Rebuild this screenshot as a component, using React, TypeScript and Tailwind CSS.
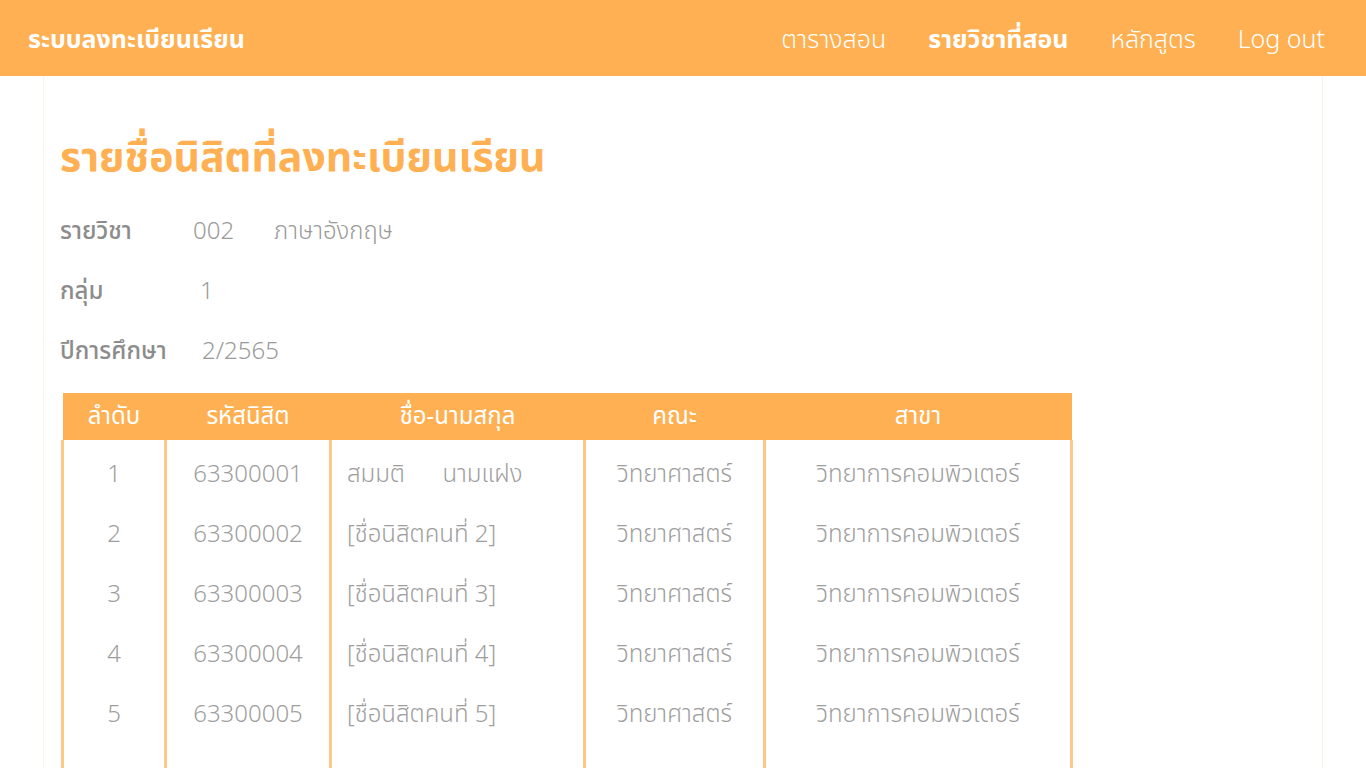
import React from "react";

const students = [
  { no: 1, id: "63300001", name: "สมมติ\u00a0\u00a0\u00a0\u00a0\u00a0\u00a0นามแฝง" },
  { no: 2, id: "63300002", name: "[ชื่อนิสิตคนที่ 2]" },
  { no: 3, id: "63300003", name: "[ชื่อนิสิตคนที่ 3]" },
  { no: 4, id: "63300004", name: "[ชื่อนิสิตคนที่ 4]" },
  { no: 5, id: "63300005", name: "[ชื่อนิสิตคนที่ 5]" },
];

const cell = "border-x-[3px] border-[#ffc785]";

export default function App() {
  return (
    <div
      className="min-h-screen bg-white"
      style={{ fontFamily: '"Noto Sans Thai", "Noto Sans", "DejaVu Sans", sans-serif' }}
    >
      <nav className="h-[76px] bg-[#ffb052] flex items-center justify-between pl-[28px] pr-[41px] pt-[6px]">
        <span className="text-white text-[25px] font-bold">ระบบลงทะเบียนเรียน</span>
        <div className="flex items-center gap-[42px] text-white text-[25px] font-light">
          <a>ตารางสอน</a>
          <a className="font-bold">รายวิชาที่สอน</a>
          <a>หลักสูตร</a>
          <a>Log out</a>
        </div>
      </nav>

      <main className="max-w-[1280px] mx-auto border-x border-[#fbf3ea] min-h-[692px] px-[16px] pt-[54px]">
        <h1 className="text-[#ffb052] text-[41px] font-bold leading-[56px]">
          รายชื่อนิสิตที่ลงทะเบียนเรียน
        </h1>

        <div className="mt-[16px] text-[24px] text-[#9a9a9a] font-light">
          <div className="flex items-center h-[60px]">
            <span className="w-[133px] font-medium text-[#8c8c8c]">รายวิชา</span>
            <span className="w-[81px]">002</span>
            <span>ภาษาอังกฤษ</span>
          </div>
          <div className="flex items-center h-[60px]">
            <span className="w-[140px] font-medium text-[#8c8c8c]">กลุ่ม</span>
            <span>1</span>
          </div>
          <div className="flex items-center h-[60px]">
            <span className="w-[142px] font-medium text-[#8c8c8c]">ปีการศึกษา</span>
            <span>2/2565</span>
          </div>
        </div>

        <table className="mt-[11px] ml-[1px] w-[1009px] table-fixed border-collapse text-[24px] font-light">
          <colgroup>
            <col className="w-[103px]" />
            <col className="w-[165px]" />
            <col className="w-[254px]" />
            <col className="w-[180px]" />
            <col className="w-[307px]" />
          </colgroup>
          <thead>
            <tr className="bg-[#ffb052] text-white h-[47px]">
              <th className="font-normal">ลำดับ</th>
              <th className="font-normal">รหัสนิสิต</th>
              <th className="font-normal">ชื่อ-นามสกุล</th>
              <th className="font-normal">คณะ</th>
              <th className="font-normal">สาขา</th>
            </tr>
          </thead>
          <tbody className="text-[#9e9e9e]">
            {students.map((s, i) => (
              <tr key={s.no} className={i === 0 ? "h-[65px]" : "h-[60px]"}>
                <td className={`${cell} text-center ${i === 0 ? "pt-[5px]" : ""}`}>{s.no}</td>
                <td className={`${cell} text-center ${i === 0 ? "pt-[5px]" : ""}`}>{s.id}</td>
                <td className={`${cell} pl-[15px] whitespace-nowrap ${i === 0 ? "pt-[5px]" : ""}`}>{s.name}</td>
                <td className={`${cell} text-center ${i === 0 ? "pt-[5px]" : ""}`}>วิทยาศาสตร์</td>
                <td className={`${cell} text-center ${i === 0 ? "pt-[5px]" : ""}`}>วิทยาการคอมพิวเตอร์</td>
              </tr>
            ))}
            <tr className="h-[60px]">
              <td className={cell}></td>
              <td className={cell}></td>
              <td className={cell}></td>
              <td className={cell}></td>
              <td className={cell}></td>
            </tr>
          </tbody>
        </table>
      </main>
    </div>
  );
}
